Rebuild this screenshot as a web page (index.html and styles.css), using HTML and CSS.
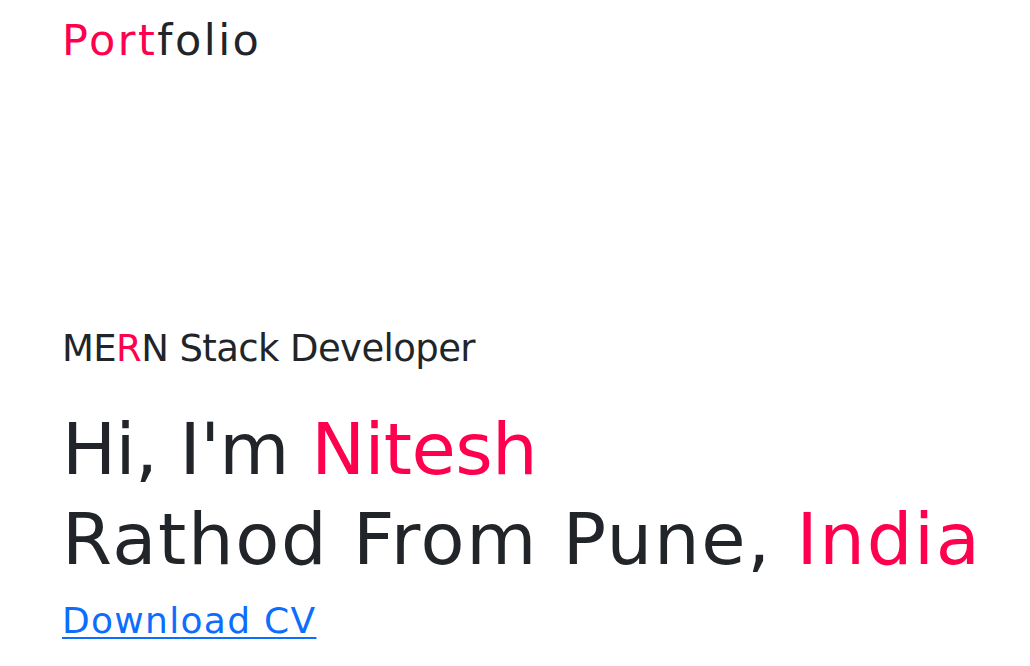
FILE: index.html
```html
<!DOCTYPE html>
<html lang="en">
<head>
<meta charset="utf-8">
<title>Portfolio</title>
<link rel="stylesheet" href="styles.css">
</head>
<body>
<header class="navbar">
  <a class="brand" href="#"><span class="accent">Port</span>folio</a>
</header>
<main class="hero">
  <p class="role">ME<span class="accent">R</span>N Stack Developer</p>
  <h1 class="title"><span class="line-one">Hi, I'm <span class="accent">Nitesh</span></span><br><span class="line-two">Rathod From Pune, <span class="accent">India</span></span></h1>
  <a class="cv-link" href="#">Download CV</a>
</main>
</body>
</html>
```

FILE: styles.css
```css
* { box-sizing: border-box; }
html, body { margin: 0; padding: 0; background: #ffffff; }
body {
  font-family: "DejaVu Sans", "Inter", sans-serif;
  color: #212529;
  font-weight: 400;
}
.accent { color: #ff004f; }
.navbar {
  padding: 14px 62px 0;
  height: 80px;
}
.brand {
  font-size: 43px;
  line-height: 52px;
  letter-spacing: 2.5px;
  color: #212529;
  text-decoration: none;
}
.hero {
  padding: 0 0 0 62px;
  margin-top: 247px;
}
.role {
  margin: 0;
  font-size: 37px;
  line-height: 44px;
  letter-spacing: -0.6px;
}
.title {
  margin: 33px 0 0;
  font-size: 72px;
  font-weight: 400;
  line-height: 90px;
  white-space: nowrap;
}
.line-one { letter-spacing: -0.6px; }
.line-two { letter-spacing: 1.7px; }
.cv-link {
  display: inline-block;
  margin-top: 15px;
  font-size: 36px;
  line-height: 44px;
  letter-spacing: 1.3px;
  color: #0d6efd;
  text-decoration: underline;
  text-decoration-thickness: 2px;
  text-underline-offset: 4px;
}
```
